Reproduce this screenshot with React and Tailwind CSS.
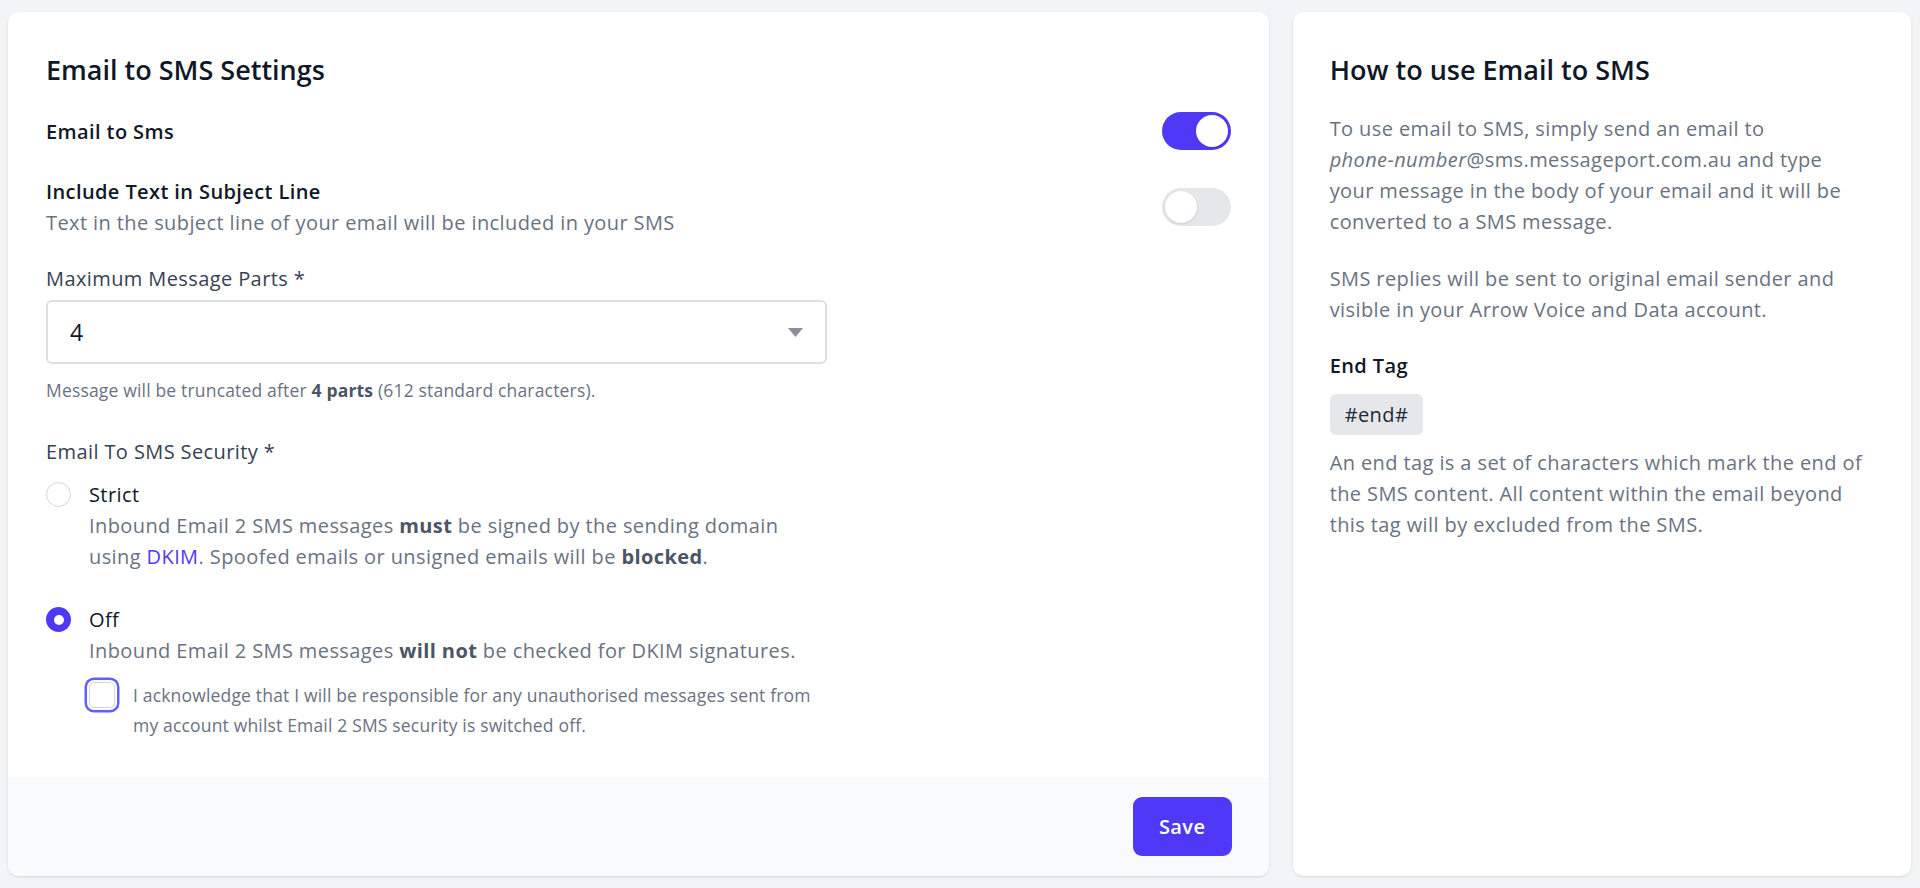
import React, { useState } from "react";

const Toggle = ({ on, onChange }) => (
  <button
    type="button"
    onClick={() => onChange(!on)}
    className={`inline-flex h-[38px] w-[69px] shrink-0 items-center rounded-full p-[3px] transition-colors ${
      on ? "bg-indigo-600" : "bg-gray-200"
    }`}
  >
    <span
      className={`h-[32px] w-[32px] rounded-full bg-white shadow transition-transform ${
        on ? "translate-x-[31px]" : "translate-x-0"
      }`}
    />
  </button>
);

const Radio = ({ checked, onClick }) =>
  checked ? (
    <span
      onClick={onClick}
      className="mt-[3px] flex h-[25px] w-[25px] shrink-0 cursor-pointer items-center justify-center rounded-full bg-indigo-600"
    >
      <span className="h-[10px] w-[10px] rounded-full bg-white" />
    </span>
  ) : (
    <span
      onClick={onClick}
      className="mt-[3px] h-[25px] w-[25px] shrink-0 cursor-pointer rounded-full border-[1.5px] border-gray-300 bg-white"
    />
  );

const App = () => {
  const [enabled, setEnabled] = useState(true);
  const [subject, setSubject] = useState(false);
  const [security, setSecurity] = useState("off");
  const [ack, setAck] = useState(false);

  return (
    <div className="min-h-screen bg-gray-100 pb-3 pl-2 pr-[9px] pt-3 font-['Open_Sans',sans-serif] text-[20px] leading-[31px] tracking-[0.02em]">
      <div className="grid grid-cols-3 gap-6">
        {/* settings card */}
        <div className="col-span-2 flex flex-col overflow-hidden rounded-[10px] bg-white shadow-sm">
          <div className="flex-1 px-[38px] pb-[37px] pt-[40px]">
            <h2 className="text-[27px] font-semibold leading-[36px] tracking-normal text-gray-900">
              Email to SMS Settings
            </h2>

            <div className="mt-[24px] flex h-[38px] items-center justify-between">
              <span className="font-semibold text-gray-900">Email to Sms</span>
              <Toggle on={enabled} onChange={setEnabled} />
            </div>

            <div className="mt-[25.5px] flex items-center justify-between">
              <div>
                <p className="font-semibold text-gray-900">Include Text in Subject Line</p>
                <p className="text-gray-500">
                  Text in the subject line of your email will be included in your SMS
                </p>
              </div>
              <Toggle on={subject} onChange={setSubject} />
            </div>

            <div className="mt-[25.5px] w-[781px]">
              <label className="block font-medium text-gray-700">Maximum Message Parts *</label>
              <div className="mt-[6px] flex h-[64px] items-center justify-between rounded-[6px] border-2 border-[#dcdfe3] pl-[22px] pr-[22px]">
                <span className="text-[23px] text-gray-900">4</span>
                <svg width="15" height="9" viewBox="0 0 15 9">
                  <path d="M0 0h15L7.5 9z" fill="#8a8f98" />
                </svg>
              </div>
              <p className="mt-[14px] text-[17.5px] leading-[25px] tracking-[0.01em] text-gray-500">
                Message will be truncated after{" "}
                <span className="font-bold text-gray-600">4 parts</span> (612 standard characters).
              </p>

              <p className="mt-[33px] font-medium text-gray-700">Email To SMS Security *</p>

              <div className="mt-[12px]">
                <div className="flex gap-[18px]">
                  <Radio checked={security === "strict"} onClick={() => setSecurity("strict")} />
                  <div>
                    <p className="font-medium text-gray-900">Strict</p>
                    <p className="text-gray-500">
                      Inbound Email 2 SMS messages{" "}
                      <span className="font-bold text-gray-600">must</span> be signed by the
                      sending domain using <a className="text-indigo-600">DKIM</a>. Spoofed emails
                      or unsigned emails will be{" "}
                      <span className="font-bold text-gray-600">blocked</span>.
                    </p>
                  </div>
                </div>

                <div className="mt-[32px] flex gap-[18px]">
                  <Radio checked={security === "off"} onClick={() => setSecurity("off")} />
                  <div>
                    <p className="font-medium text-gray-900">Off</p>
                    <p className="text-gray-500">
                      Inbound Email 2 SMS messages{" "}
                      <span className="font-bold text-gray-600">will not</span> be checked for
                      DKIM signatures.
                    </p>
                    <div className="mt-[14px] flex items-start gap-[18px]">
                      <button
                        type="button"
                        onClick={() => setAck(!ack)}
                        className={`mt-[2px] h-[26px] w-[26px] shrink-0 rounded-[5px] border-[1.5px] border-gray-300 ring-[2.5px] ring-indigo-500 ring-offset-2 ${
                          ack ? "bg-indigo-600" : "bg-white"
                        }`}
                      />
                      <p className="text-[17.5px] leading-[30px] tracking-[0.01em] text-gray-500">
                        I acknowledge that I will be responsible for any unauthorised messages sent
                        from my account whilst Email 2 SMS security is switched off.
                      </p>
                    </div>
                  </div>
                </div>
              </div>
            </div>
          </div>

          <div className="flex justify-end bg-gray-50 px-[37px] py-[20px]">
            <button
              type="button"
              className="flex h-[59px] w-[99px] items-center justify-center rounded-[9px] bg-indigo-600 font-semibold text-white"
            >
              Save
            </button>
          </div>
        </div>

        {/* help card */}
        <div className="rounded-[10px] bg-white pl-[37px] pr-[43px] pt-[40px] shadow-sm">
          <h2 className="text-[27px] font-semibold leading-[36px] tracking-normal text-gray-900">
            How to use Email to SMS
          </h2>
          <p className="mt-[25px] text-gray-500">
            To use email to SMS, simply send an email to{" "}
            <span className="whitespace-nowrap">
              <em>phone-number</em>@sms.messageport.com.au
            </span>{" "}
            and type your message in the body of your email and it will be converted to a SMS
            message.
          </p>
          <p className="mt-[26px] text-gray-500">
            SMS replies will be sent to original email sender and visible in your Arrow Voice and
            Data account.
          </p>
          <h3 className="mt-[25px] font-semibold text-gray-900">End Tag</h3>
          <code className="mt-[12.5px] inline-flex h-[41px] items-center rounded-[6px] bg-gray-200 px-[15px] font-['Open_Sans',sans-serif] text-gray-800">
            #end#
          </code>
          <p className="mt-[12.5px] text-gray-500">
            An end tag is a set of characters which mark the end of the SMS content. All content
            within the email beyond this tag will by excluded from the SMS.
          </p>
        </div>
      </div>
    </div>
  );
};

export default App;
